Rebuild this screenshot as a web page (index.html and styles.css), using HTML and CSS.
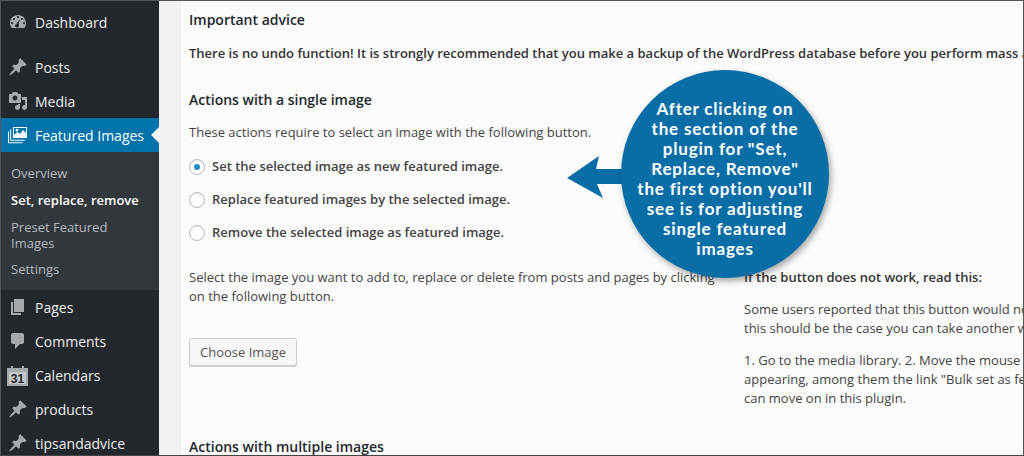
FILE: index.html
```html
<!DOCTYPE html>
<html lang="en">
<head>
  <meta charset="UTF-8" />
  <title>Featured Images</title>
  <link rel="stylesheet" href="styles.css">
</head>
<body>
  <div class="wrap">
    <nav class="sidebar">
      <ul class="menu first">
        <li><svg class="ico" viewBox="0 0 20 20"><path fill-rule="evenodd" d="M3.760 16h12.480c1.100-1.370 1.760-3.110 1.760-5 0-4.420-3.580-8-8-8s-8 3.580-8 8c0 1.890.66 3.630 1.760 5zM10 4c.55 0 1 .45 1 1s-.45 1-1 1-1-.45-1-1 .45-1 1-1zM6 6c.55 0 1 .45 1 1s-.45 1-1 1-1-.45-1-1 .45-1 1-1zm8 0c.55 0 1 .45 1 1s-.45 1-1 1-1-.45-1-1 .45-1 1-1zm-5.370 5.550L12 7l-1.500 5.500c.3.400.5.800.5 1.300 0 1-.9 1.700-2 1.700s-2-.8-2-1.700c0-.8.700-1.500 1.630-1.750zM4 10c.55 0 1 .45 1 1s-.45 1-1 1-1-.45-1-1 .45-1 1-1zm12 0c.55 0 1 .45 1 1s-.45 1-1 1-1-.45-1-1 .45-1 1-1z"/></svg>Dashboard</li>
      </ul>
      <ul class="menu">
        <li><svg class="ico" viewBox="0 0 20 20"><path d="M10.440 3.020l1.820-1.820 6.360 6.350-1.830 1.820c-1.050-.68-2.480-.57-3.410.36l-.75.75c-.92.93-1.040 2.350-.35 3.410l-1.830 1.820-2.410-2.410-2.800 2.790c-.42.42-3.380 2.710-3.800 2.290s1.860-3.390 2.280-3.810l2.790-2.790L4.100 9.360l1.830-1.820c1.050.69 2.480.57 3.400-.36l.75-.75c.93-.92 1.050-2.350.36-3.410z"/></svg>Posts</li>
        <li><svg class="ico" viewBox="0 0 20 20"><path fill-rule="evenodd" d="M13 11V4c0-.55-.45-1-1-1h-1.670L9 1H5L3.670 3H2c-.55 0-1 .45-1 1v7c0 .55.45 1 1 1h10c.55 0 1-.45 1-1zM7 4.500c1.380 0 2.500 1.120 2.500 2.500S8.380 9.500 7 9.500 4.500 8.380 4.500 7 5.620 4.500 7 4.500zM14 6h5v10.500c0 1.380-1.120 2.500-2.500 2.500S14 17.880 14 16.500s1.120-2.500 2.500-2.500c.17 0 .34.02.5.05V9h-3V6zm-4 8.050V13h2v3.500c0 1.380-1.120 2.500-2.500 2.500S7 17.880 7 16.500 8.120 14 9.500 14c.17 0 .34.02.5.05z"/></svg>Media</li>
        <li class="current"><svg class="ico" viewBox="0 0 20 20"><path d="M5 2h14v11H5zm1 1v7l3.500-3 2.500 2 3-4 3 3V3zm3 .800a1.400 1.400 0 1 1 0 2.800 1.400 1.400 0 0 1 0-2.800z" fill-rule="evenodd"/><path d="M3.200 4.200v10.600h13.600v1H2.200V4.200zM1 6.500v10.800h13.600v1H0V6.500z"/></svg>Featured Images</li>
      </ul>
      <ul class="submenu">
        <li>Overview</li>
        <li class="on">Set, replace, remove</li>
        <li class="two">Preset Featured Images</li>
        <li>Settings</li>
      </ul>
      <ul class="menu">
        <li><svg class="ico" viewBox="0 0 20 20"><path d="M6 15V2h10v13H6zm-1 1h8v2H3V5h2v11z"/></svg>Pages</li>
        <li><svg class="ico" viewBox="0 0 20 20"><path d="M5 2h9c1.100 0 2 .9 2 2v7c0 1.100-.9 2-2 2h-2l-5 5v-5H5c-1.100 0-2-.9-2-2V4c0-1.100.9-2 2-2z"/></svg>Comments</li>
        <li><svg class="ico cal" viewBox="0 0 21 21"><path d="M0 3h4V1h2v2h9V1h2v2h4v18H0z"/><rect x="2" y="7" width="17" height="12" class="cal-page"/><text x="10.500" y="18" text-anchor="middle" class="cal-num">31</text></svg>Calendars</li>
        <li><svg class="ico" viewBox="0 0 20 20"><path d="M10.440 3.020l1.820-1.820 6.360 6.350-1.830 1.820c-1.050-.68-2.480-.57-3.410.36l-.75.75c-.92.93-1.040 2.350-.35 3.410l-1.830 1.820-2.410-2.410-2.800 2.790c-.42.42-3.380 2.710-3.800 2.290s1.860-3.390 2.280-3.810l2.790-2.790L4.100 9.360l1.830-1.820c1.050.69 2.480.57 3.400-.36l.75-.75c.93-.92 1.050-2.350.36-3.410z"/></svg>products</li>
        <li><svg class="ico" viewBox="0 0 20 20"><path d="M10.440 3.020l1.820-1.820 6.360 6.350-1.830 1.820c-1.050-.68-2.480-.57-3.410.36l-.75.75c-.92.93-1.040 2.350-.35 3.410l-1.830 1.820-2.410-2.410-2.800 2.790c-.42.42-3.380 2.710-3.800 2.290s1.860-3.390 2.280-3.810l2.790-2.790L4.100 9.360l1.830-1.820c1.050.69 2.480.57 3.400-.36l.75-.75c.93-.92 1.050-2.350.36-3.410z"/></svg>tipsandadvice</li>
      </ul>
    </nav>

    <main class="content">
      <div class="panel">
        <h3>Important advice</h3>
        <p class="nowrap advice"><strong>There is no undo function! It is strongly recommended that you make a backup of the WordPress database before you perform mass actions.</strong></p>

        <h3 class="single-title">Actions with a single image</h3>
        <p class="lead">These actions require to select an image with the following button.</p>

        <div class="options">
          <label class="option"><span class="radio checked"></span>Set the selected image as new featured image.</label>
          <label class="option"><span class="radio"></span>Replace featured images by the selected image.</label>
          <label class="option"><span class="radio"></span>Remove the selected image as featured image.</label>
        </div>

        <div class="columns">
          <div class="col-left">
            <p>Select the image you want to add to, replace or delete from posts and pages by clicking on the following button.</p>
            <button class="btn">Choose Image</button>
          </div>
          <div class="col-right">
            <p class="help-title"><strong>If the button does not work, read this:</strong></p>
            <p class="nowrap">Some users reported that this button would not work. If<br>this should be the case you can take another way:</p>
            <p class="nowrap">1. Go to the media library. 2. Move the mouse over an image, links are<br>appearing, among them the link "Bulk set as featured image". Then you<br>can move on in this plugin.</p>
          </div>
        </div>

        <h3 class="multi-title">Actions with multiple images</h3>
      </div>
    </main>
  </div>

  <div class="callout">
    <svg class="arrow" viewBox="0 0 60 42"><path d="M1 22L33 0l-3 13h30v15H31l6 14z"/></svg>
    <div class="bubble">After clicking on<br>the section of the<br>plugin for "Set,<br>Replace, Remove"<br>the first option you'll<br>see is for adjusting<br>single featured<br>images</div>
  </div>
</body>
</html>
```

FILE: styles.css
```css
* {
  box-sizing: border-box;
}

html, body {
  margin: 0;
  height: 456px;
  overflow: hidden;
}

body {
  position: relative;
  font-family: "Open Sans", sans-serif;
  font-size: 13px;
  line-height: 19px;
  color: #444;
  background: #f1f1f1;
}

.wrap {
  display: flex;
  height: 456px;
  border: 1px solid #555;
  border-bottom-color: #444;
}

/* sidebar */
.sidebar {
  width: 158px;
  flex: none;
  background: #23282d;
  color: #eee;
  font-size: 14px;
  overflow: hidden;
}

.menu {
  list-style: none;
  margin: 0;
  padding: 0;
}

.menu li {
  display: flex;
  align-items: center;
  height: 34px;
  padding-left: 7px;
  white-space: nowrap;
}

.menu.first {
  margin-bottom: 11px;
  padding-top: 4px;
}

.ico {
  width: 20px;
  height: 20px;
  margin-right: 7px;
  flex: none;
  fill: #a7aaad;
}

.ico.cal {
  width: 21px;
  height: 21px;
  margin-left: -1px;
}

.cal-page {
  fill: #c4c6c8;
}

.cal-num {
  font-family: "Liberation Sans", sans-serif;
  font-size: 12px;
  font-weight: 700;
  fill: #23282d;
}

.menu .current {
  position: relative;
  background: #0073aa;
  color: #fff;
}

.current .ico {
  fill: #fff;
}

.current::after {
  content: "";
  position: absolute;
  right: 0;
  top: 9px;
  border: 8px solid transparent;
  border-right-color: #f1f1f1;
  border-left-width: 0;
}

.submenu {
  list-style: none;
  margin: 0;
  padding: 8px 0 7px;
  background: #32373c;
  color: #b4b9be;
  font-size: 13px;
  line-height: 16px;
}

.submenu li {
  padding: 5px 11px 6px 10px;
}

.submenu .two {
  padding-bottom: 5px;
}

.submenu .on {
  color: #fff;
  font-weight: 600;
}

/* main */
.content {
  flex: 1;
  min-width: 0;
  padding-left: 22px;
}

.panel {
  height: 100%;
  padding: 9px 0 0 8px;
  background: #fbfbfb;
  overflow: hidden;
}

h3 {
  margin: 0;
  font-size: 14px;
  line-height: 19px;
  font-weight: 600;
  color: #23282d;
}

p {
  margin: 0;
}

.nowrap {
  white-space: nowrap;
}

.advice {
  margin-top: 15px;
  color: #333;
}

.advice strong {
  font-weight: 600;
}

.single-title {
  margin-top: 27px;
}

.lead {
  margin-top: 14px;
}

.options {
  margin-top: 8px;
}

.option {
  display: flex;
  align-items: center;
  height: 33px;
  font-weight: 600;
  color: #444;
}

.radio {
  width: 16px;
  height: 16px;
  margin-right: 7px;
  border: 1px solid #b4b9be;
  border-radius: 50%;
  background: #fff;
  box-shadow: inset 0 1px 2px rgba(0, 0, 0, .1);
  display: flex;
  align-items: center;
  justify-content: center;
}

.radio.checked::before {
  content: "";
  width: 6px;
  height: 6px;
  border-radius: 50%;
  background: #1e8cbe;
}

.columns {
  display: flex;
  margin-top: 19px;
}

.col-left {
  width: 555px;
  padding-right: 25px;
  flex: none;
}

.col-right p {
  margin-bottom: 13px;
}

.help-title strong {
  font-weight: 600;
  color: #333;
}

.btn {
  display: block;
  margin-top: 32px;
  width: 108px;
  height: 28px;
  padding: 0;
  font: 13px "Open Sans", sans-serif;
  color: #555;
  background: #f7f7f7;
  border: 1px solid #ccc;
  border-radius: 3px;
  box-shadow: 0 1px 0 #ccc;
}

.multi-title {
  margin-top: 16px;
}

/* callout over the page */
.callout {
  position: absolute;
  left: 566px;
  top: 70px;
  width: 263px;
  height: 208px;
}

.callout .arrow {
  position: absolute;
  left: 0;
  top: 86px;
  width: 60px;
  height: 42px;
  fill: #0a6ea6;
}

.callout .bubble {
  position: absolute;
  left: 55px;
  top: 0;
  width: 208px;
  height: 208px;
  padding-top: 29px;
  border-radius: 50%;
  background: #0a6ea6;
  box-shadow: 2px 3px 6px rgba(0, 0, 0, .35);
  color: #fff;
  font-family: Lato, sans-serif;
  font-weight: 700;
  font-size: 17px;
  line-height: 20px;
  letter-spacing: .8px;
  text-align: center;
  white-space: nowrap;
}
```
